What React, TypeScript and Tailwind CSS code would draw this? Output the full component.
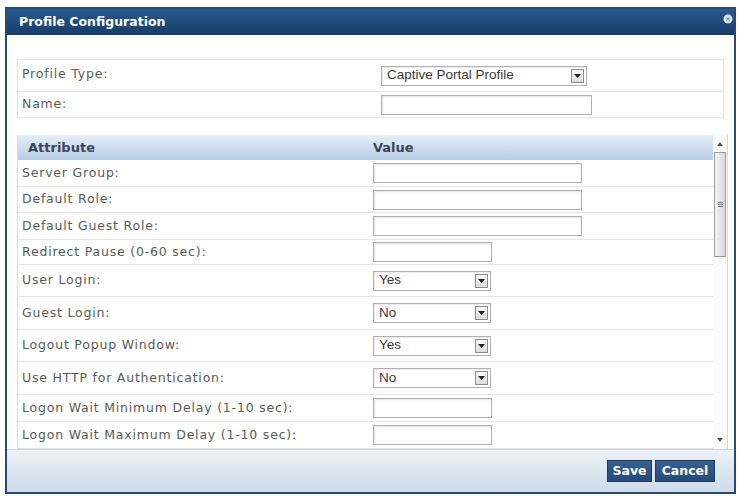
import React from "react";

function Arrow() {
  return (
    <span className="flex h-[14px] w-[13px] items-center justify-center border border-[#8c8c8c] bg-gradient-to-b from-[#fafafa] to-[#dcdcdc]">
      <svg width="7" height="4" viewBox="0 0 7 4">
        <path d="M0 0 L7 0 L3.5 4 Z" fill="#222" />
      </svg>
    </span>
  );
}

function Select({ value, w }: { value: string; w: string }) {
  return (
    <div
      className={`flex h-[20px] items-center justify-between border border-[#b0b0b0] bg-white pl-[5px] pr-[2px] font-['Liberation_Sans',Arial,sans-serif] text-[13.5px] text-[#3a3a3a] shadow-[inset_1px_1px_1px_rgba(0,0,0,0.08)] ${w}`}
    >
      <span>{value}</span>
      <Arrow />
    </div>
  );
}

function Input({ w }: { w: string }) {
  return (
    <div
      className={`h-[20px] border border-[#b0b0b0] bg-white shadow-[inset_1px_1px_2px_rgba(0,0,0,0.12)] ${w}`}
    />
  );
}

type Row = { label: string; h: string; kind: "in" | "short" | "sel"; value?: string };

const rows: Row[] = [
  { label: "Server Group:", h: "h-[27px]", kind: "in" },
  { label: "Default Role:", h: "h-[26px]", kind: "in" },
  { label: "Default Guest Role:", h: "h-[27px]", kind: "in" },
  { label: "Redirect Pause (0-60 sec):", h: "h-[25px]", kind: "short" },
  { label: "User Login:", h: "h-[32px]", kind: "sel", value: "Yes" },
  { label: "Guest Login:", h: "h-[33px]", kind: "sel", value: "No" },
  { label: "Logout Popup Window:", h: "h-[32px]", kind: "sel", value: "Yes" },
  { label: "Use HTTP for Authentication:", h: "h-[33px]", kind: "sel", value: "No" },
  { label: "Logon Wait Minimum Delay (1-10 sec):", h: "h-[27px]", kind: "short" },
  { label: "Logon Wait Maximum Delay (1-10 sec):", h: "h-[27px]", kind: "short" },
];

export default function App() {
  return (
    <div className="h-[496px] w-[740px] overflow-hidden bg-white pl-[5px] pt-[7px] font-['DejaVu_Sans',Verdana,sans-serif]">
      <div className="flex h-[487px] w-[731px] flex-col border-2 border-[#2a4a72] bg-white">
        {/* Title bar */}
        <div className="flex h-[26px] shrink-0 items-center justify-between bg-gradient-to-b from-[#2d5a8e] via-[#1f4a7c] to-[#173c68] pl-[12px] pr-[1px]">
          <span className="text-[12.5px] font-bold text-white">Profile Configuration</span>
          <svg width="10" height="10" viewBox="0 0 10 10" className="mb-[6px]">
            <circle cx="5" cy="5" r="4.5" fill="#dfe6ef" />
            <path d="M3.3 3.3 L6.7 6.7 M6.7 3.3 L3.3 6.7" stroke="#7a8aa0" strokeWidth="1.1" />
          </svg>
        </div>

        {/* Body */}
        <div className="flex h-[414px] shrink-0 flex-col pl-[10px] pt-[24px]">
          <div className="w-[707px] border border-[#e4e4e4] text-[12.5px] tracking-[0.8px] text-[#5a5a5a]">
            <div className="flex h-[32px] items-center border-b border-[#e4e4e4]">
              <div className="w-[359px] pb-[2px] pl-[4px]">Profile Type:</div>
              <div className="pl-[4px] tracking-normal">
                <Select value="Captive Portal Profile" w="w-[206px]" />
              </div>
            </div>
            <div className="flex h-[25px] items-center">
              <div className="w-[359px] pl-[4px]">Name:</div>
              <div className="pl-[4px]">
                <Input w="w-[211px]" />
              </div>
            </div>
          </div>

          <div className="mt-[17px] flex h-[314px] w-[711px]">
            <div className="flex w-[696px] flex-col border-l border-[#dedede]">
              <div className="flex h-[25px] shrink-0 items-center bg-gradient-to-b from-[#e6eef8] to-[#b7cce4] text-[13px] font-bold text-[#3a4658]">
                <div className="w-[351px] pl-[10px]">Attribute</div>
                <div className="pl-[4px]">Value</div>
              </div>
              {rows.map((r) => (
                <div
                  key={r.label}
                  className={`flex shrink-0 items-center border-b border-[#e4e4e4] text-[12.5px] tracking-[0.8px] text-[#5a5a5a] ${r.h}`}
                >
                  <div className="w-[351px] pl-[4px]">{r.label}</div>
                  <div className="pl-[4px] tracking-normal">
                    {r.kind === "in" && <Input w="w-[209px]" />}
                    {r.kind === "short" && <Input w="w-[119px]" />}
                    {r.kind === "sel" && <Select value={r.value ?? ""} w="w-[118px]" />}
                  </div>
                </div>
              ))}
            </div>
            {/* Scrollbar */}
            <div className="flex w-[15px] flex-col items-center border-r border-[#d8d8d8] bg-[#fbfbfb]">
              <svg width="6" height="4" viewBox="0 0 6 4" className="mt-[7px]">
                <path d="M0 4 L6 4 L3 0 Z" fill="#555" />
              </svg>
              <div className="mt-[6px] flex h-[105px] w-[12px] items-center justify-center border border-[#9c9c9c] bg-gradient-to-r from-[#f4f4f4] via-[#e6e6e6] to-[#d8d8d8]">
                <div className="flex flex-col gap-[1px]">
                  <div className="h-[1px] w-[5px] bg-[#777]" />
                  <div className="h-[1px] w-[5px] bg-[#777]" />
                  <div className="h-[1px] w-[5px] bg-[#777]" />
                </div>
              </div>
              <div className="flex-1" />
              <svg width="6" height="4" viewBox="0 0 6 4" className="mb-[7px]">
                <path d="M0 0 L6 0 L3 4 Z" fill="#555" />
              </svg>
            </div>
          </div>
        </div>

        {/* Footer */}
        <div className="flex flex-1 items-center justify-end gap-[3px] border-t border-[#c8d4e2] bg-gradient-to-b from-[#edf2f8] via-[#dde6f1] to-[#cfdcec] pr-[19px]">
          <button className="h-[22px] w-[45px] border border-[#1c3a60] bg-gradient-to-b from-[#38608f] to-[#254a78] text-[12.5px] font-bold text-white">
            Save
          </button>
          <button className="h-[22px] w-[60px] border border-[#1c3a60] bg-gradient-to-b from-[#38608f] to-[#254a78] text-[12.5px] font-bold text-white">
            Cancel
          </button>
        </div>
      </div>
    </div>
  );
}
